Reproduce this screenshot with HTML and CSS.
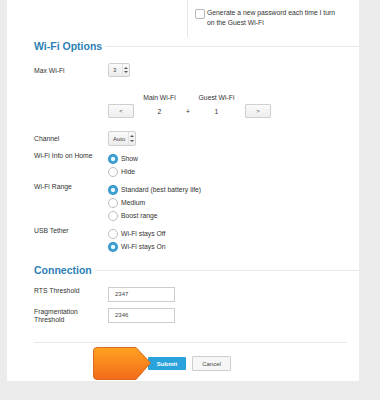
FILE: index.html
```html
<!DOCTYPE html>
<html lang="en">
<head>
    <meta charset="UTF-8">
    <meta name="viewport" content="width=device-width, initial-scale=1.0">
    <title>Wi-Fi Settings</title>
    <link rel="stylesheet" href="styles.css">
</head>
<body>
    <div class="panel">
        <div class="top">
            <div class="top-left"></div>
            <div class="top-right">
                <div class="check">
                    <span class="box"></span>
                    <span class="check-text">Generate a new password each time I turn on the Guest Wi-Fi</span>
                </div>
            </div>
        </div>

        <div class="section-title">
            <h2>Wi-Fi Options</h2>
            <span class="rule"></span>
        </div>

        <div class="row row-max">
            <div class="label">Max Wi-Fi</div>
            <div class="select select-small"><span class="val">3</span><span class="arrows"></span></div>
        </div>

        <div class="counter-head">
            <span class="c-btn-space"></span>
            <span class="c-cell">Main Wi-Fi</span>
            <span class="c-plus"></span>
            <span class="c-cell">Guest Wi-Fi</span>
        </div>
        <div class="counter">
            <button class="c-btn">&lt;</button>
            <span class="c-cell">2</span>
            <span class="c-plus">+</span>
            <span class="c-cell">1</span>
            <button class="c-btn">&gt;</button>
        </div>

        <div class="row row-channel">
            <div class="label">Channel</div>
            <div class="select select-auto"><span class="val">Auto</span><span class="arrows"></span></div>
        </div>

        <div class="row group group-first">
            <div class="label">Wi-Fi Info on Home</div>
            <div class="options">
                <div class="radio"><span class="dot on"></span>Show</div>
                <div class="radio"><span class="dot"></span>Hide</div>
            </div>
        </div>

        <div class="row group">
            <div class="label">Wi-Fi Range</div>
            <div class="options">
                <div class="radio"><span class="dot on"></span>Standard (best battery life)</div>
                <div class="radio"><span class="dot"></span>Medium</div>
                <div class="radio"><span class="dot"></span>Boost range</div>
            </div>
        </div>

        <div class="row group">
            <div class="label">USB Tether</div>
            <div class="options">
                <div class="radio"><span class="dot"></span>Wi-Fi stays Off</div>
                <div class="radio"><span class="dot on"></span>Wi-Fi stays On</div>
            </div>
        </div>

        <div class="section-title section-conn">
            <h2>Connection</h2>
            <span class="rule"></span>
        </div>

        <div class="row field field-first">
            <div class="label">RTS Threshold</div>
            <div class="input">2347</div>
        </div>
        <div class="row field">
            <div class="label">Fragmentation<br>Threshold</div>
            <div class="input">2346</div>
        </div>

        <div class="divider"></div>

        <div class="actions">
            <button class="btn btn-submit">Submit</button>
            <button class="btn btn-cancel">Cancel</button>
            <!-- orange pointer over the submit button -->
            <svg class="pointer" width="60" height="34" viewBox="0 0 60 34">
                <defs>
                    <linearGradient id="og" x1="0" y1="0" x2="0" y2="1">
                        <stop offset="0" stop-color="#ffa21f"/>
                        <stop offset="1" stop-color="#f36b1c"/>
                    </linearGradient>
                </defs>
                <path d="M4 0.5 H43 L57.5 16 L43 32.5 H4 Q0.5 32.5 0.5 29 V4 Q0.5 0.5 4 0.5 Z" fill="url(#og)" stroke="#d9691c" stroke-width="1"/>
            </svg>
        </div>
    </div>
</body>
</html>
```

FILE: styles.css
```css
body {
    margin: 0;
    padding: 0;
    background-color: #ebebeb;
    font-family: "Liberation Sans", Arial, sans-serif;
    font-size: 6.8px;
    color: #333;
}

.panel {
    width: 325px;
    margin-left: 7px;
    padding: 0 0 10px 27px;
    background: #fff;
}

/* Top block (end of guest section) */
.top {
    display: flex;
    height: 37px;
    margin-left: -27px;
}

.top-left {
    width: 180px;
    border-right: 1px solid #e6e6e6;
}

.top-right {
    padding: 9px 0 0 7px;
}

.check {
    display: flex;
    gap: 2px;
}

.box {
    width: 8px;
    height: 8px;
    border: 1px solid #b5b5b5;
    border-radius: 2px;
    background: #fff;
    flex-shrink: 0;
}

.check-text {
    width: 132px;
    line-height: 10px;
    margin-top: -1px;
    color: #333;
}

/* Section headings */
.section-title {
    display: flex;
    align-items: center;
    height: 16px;
    margin-top: 1px;
}

.section-title h2 {
    margin: 0;
    font-size: 10.5px;
    font-weight: bold;
    color: #2d7fb6;
}

.rule {
    flex: 1;
    margin-left: 3px;
    border-top: 1px solid #e8e8e8;
}

.section-conn {
    margin-top: 9px;
}

/* Rows */
.row {
    display: grid;
    grid-template-columns: 74px auto;
    align-items: center;
}

.label {
    line-height: 9px;
}

.row-max {
    margin-top: 9px;
}

.row-channel {
    margin-top: 13px;
}

.select {
    display: flex;
    align-items: center;
    height: 12px;
    border: 1px solid #cfcfcf;
    border-radius: 2px;
    background: linear-gradient(#fafafa, #ececec);
    font-size: 6px;
    color: #444;
}

.select-small {
    width: 20px;
}

.select-auto {
    width: 26px;
    height: 13px;
}

.select .val {
    flex: 1;
    padding-left: 4px;
}

.arrows {
    position: relative;
    width: 6px;
    height: 100%;
    border-left: 1px solid #e0e0e0;
}

.arrows::before,
.arrows::after {
    content: "";
    position: absolute;
    left: 1px;
    border-left: 2px solid transparent;
    border-right: 2px solid transparent;
}

.arrows::before {
    top: 3px;
    border-bottom: 2px solid #555;
}

.arrows::after {
    bottom: 3px;
    border-top: 2px solid #555;
}

/* Main / Guest counter */
.counter-head,
.counter {
    display: flex;
    align-items: center;
    padding-left: 74px;
}

.counter-head {
    margin-top: 15px;
    height: 10px;
}

.counter {
    margin-top: 2px;
}

.c-btn-space {
    width: 26px;
}

.c-cell {
    width: 51px;
    text-align: center;
}

.c-plus {
    width: 6px;
    text-align: center;
}

.c-btn {
    width: 26px;
    height: 14px;
    padding: 0;
    border: 1px solid #cfcfcf;
    border-radius: 1px;
    background: linear-gradient(#fafafa, #eeeeee);
    font-family: "Liberation Sans", Arial, sans-serif;
    font-size: 6px;
    color: #444;
}

.counter .c-btn:last-child {
    margin-left: 3px;
}

/* Radio groups */
.group {
    align-items: start;
    margin-top: 5px;
}

.group-first {
    margin-top: 6px;
}

.group .label {
    margin-top: -1px;
}

.radio {
    display: flex;
    align-items: center;
    gap: 3px;
    height: 13px;
}

.dot {
    box-sizing: border-box;
    width: 10px;
    height: 10px;
    border: 1px solid #bdbdbd;
    border-radius: 50%;
    background: #fff;
}

.dot.on {
    border: none;
    background: radial-gradient(circle, #e9f6fb 0 1.8px, #3ea4d4 2.4px 3.6px, #2f8fc4 4.2px 5px);
}

/* Inputs */
.field {
    align-items: start;
    margin-top: 6px;
}

.field-first {
    margin-top: 9px;
}

.field .label {
    line-height: 8px;
}

.input {
    box-sizing: border-box;
    width: 67px;
    height: 15px;
    padding-left: 6px;
    border: 1px solid #cdcdcd;
    line-height: 13px;
    font-size: 6px;
    color: #444;
}

.divider {
    margin: 18px 12px 0 0;
    border-top: 1px solid #e8e8e8;
}

/* Buttons */
.actions {
    position: relative;
    display: flex;
    align-items: center;
    gap: 6px;
    margin-top: 13px;
    padding-left: 114px;
}

.btn {
    height: 13px;
    padding: 0;
    border-radius: 1px;
    font-family: "Liberation Sans", Arial, sans-serif;
    font-size: 6px;
    cursor: pointer;
}

.btn-submit {
    width: 38px;
    border: none;
    background-color: #2aa3dd;
    color: #fff;
    font-weight: bold;
}

.btn-cancel {
    width: 39px;
    height: 15px;
    border: 1px solid #cfcfcf;
    background-color: #f6f6f6;
    color: #444;
}

.pointer {
    position: absolute;
    left: 59px;
    top: -9px;
}
```
